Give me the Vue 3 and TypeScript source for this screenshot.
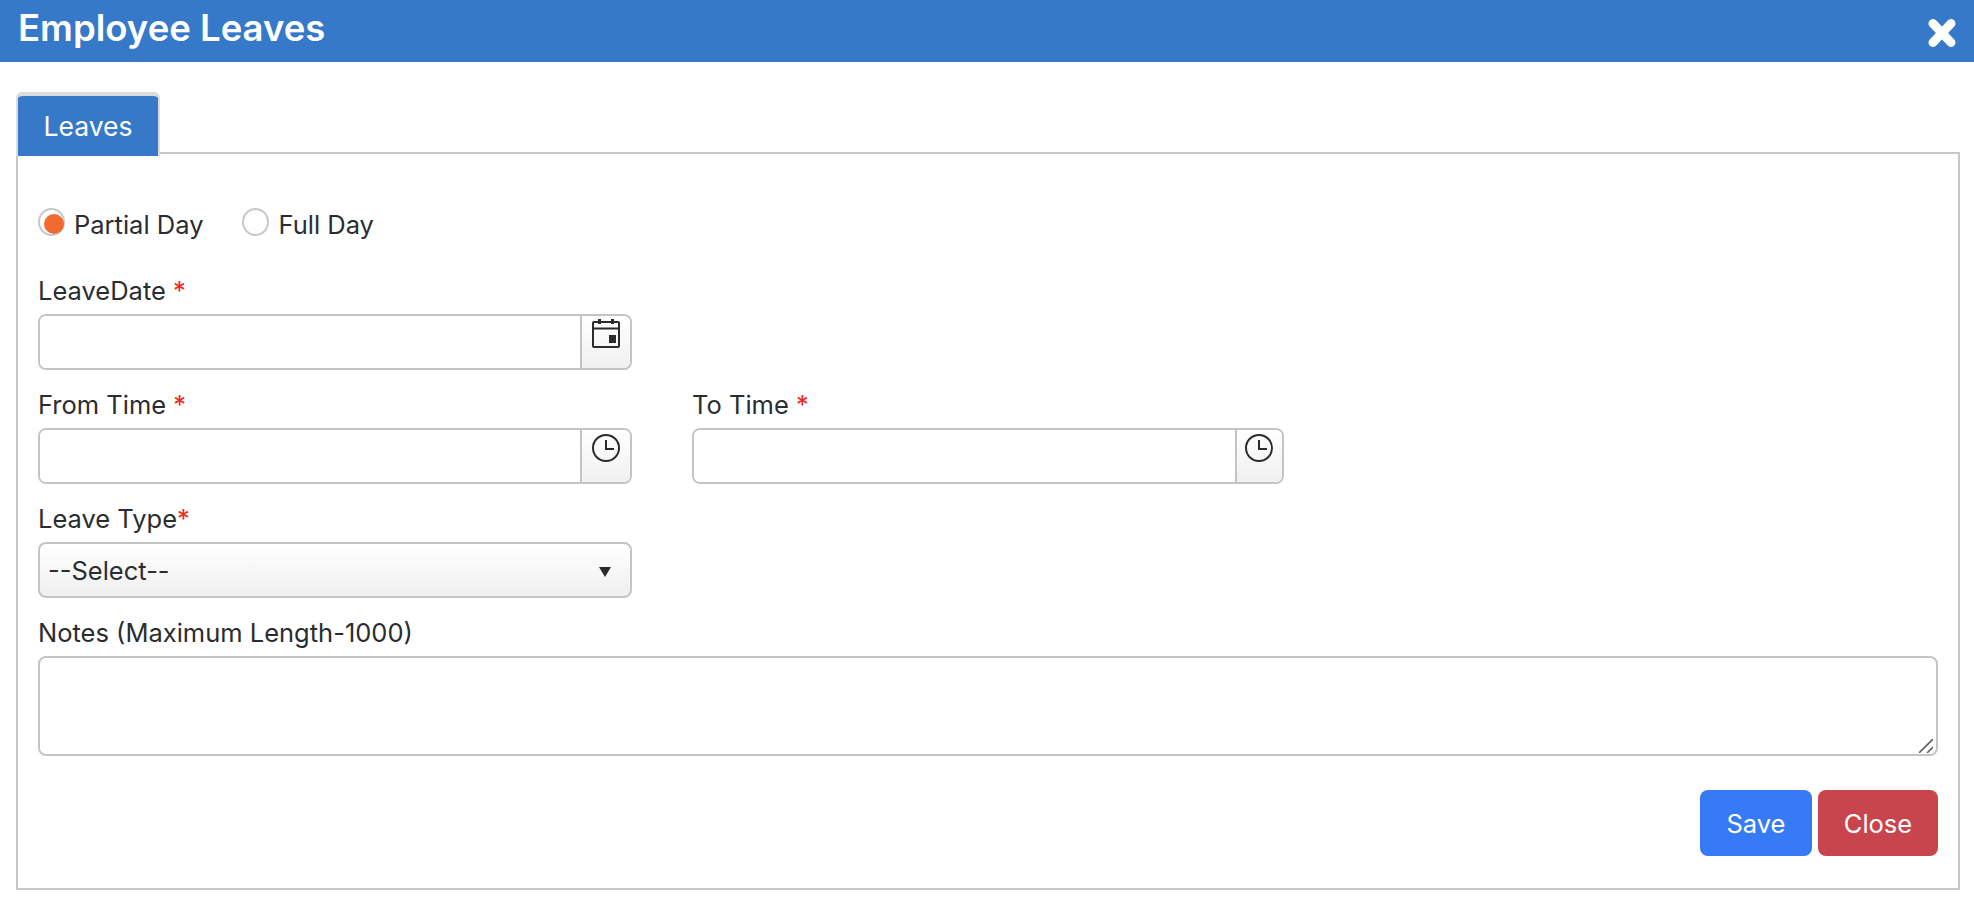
<script setup lang="ts">
const radios = [
  { label: 'Partial Day', checked: true },
  { label: 'Full Day', checked: false },
]
</script>

<template>
  <div class="page">
    <header class="titlebar">
      <h1>Employee Leaves</h1>
      <svg class="close-x" viewBox="0 0 28 30" aria-hidden="true">
        <path d="M5 5.5 23 24.5M23 5.5 5 24.5" />
      </svg>
    </header>

    <nav class="tabs"><div class="tab">Leaves</div></nav>

    <main class="panel">
      <div class="radios">
        <label v-for="r in radios" :key="r.label" class="radio">
          <span class="ring" :class="{ on: r.checked }"></span>
          <span class="radio-text">{{ r.label }}</span>
        </label>
      </div>

      <div class="row">
        <div class="field">
          <label>LeaveDate <em>*</em></label>
          <div class="group">
            <input type="text" />
            <span class="addon">
              <svg class="icon calendar" viewBox="0 0 28 30" aria-hidden="true">
                <path class="line" d="M2 4h24a1 1 0 0 1 1 1v23a1 1 0 0 1-1 1H2a1 1 0 0 1-1-1V5a1 1 0 0 1 1-1zM1 10.500h26" />
                <path class="solid" d="M6 1h3v5H6zM19 1h3v5h-3zM17 17h7v8h-7z" />
              </svg>
            </span>
          </div>
        </div>
      </div>

      <div class="row">
        <div class="field">
          <label>From Time <em>*</em></label>
          <div class="group">
            <input type="text" />
            <span class="addon">
              <svg class="icon" viewBox="0 0 28 28" aria-hidden="true">
                <circle class="line" cx="14" cy="14" r="13" />
                <path class="line" d="M14 6v9h8" />
              </svg>
            </span>
          </div>
        </div>
        <div class="field">
          <label>To Time <em>*</em></label>
          <div class="group">
            <input type="text" />
            <span class="addon narrow">
              <svg class="icon" viewBox="0 0 28 28" aria-hidden="true">
                <circle class="line" cx="14" cy="14" r="13" />
                <path class="line" d="M14 6v9h8" />
              </svg>
            </span>
          </div>
        </div>
      </div>

      <div class="row">
        <div class="field">
          <label>Leave Type<em>*</em></label>
          <div class="select-wrap">
            <select>
              <option>--Select--</option>
            </select>
            <span class="caret"></span>
          </div>
        </div>
      </div>

      <div class="field notes">
        <label>Notes (Maximum Length-1000)</label>
        <div class="area-wrap">
          <textarea></textarea>
          <svg class="grip" viewBox="0 0 14 14" aria-hidden="true">
            <path d="M0 14 14 0M8 14l6-6" />
          </svg>
        </div>
      </div>

      <div class="actions">
        <button type="button" class="btn save">Save</button>
        <button type="button" class="btn close">Close</button>
      </div>
    </main>
  </div>
</template>

<style>
html, body { background: #fff; }
</style>

<style scoped>
.page {
  font-family: Inter, "Liberation Sans", sans-serif;
  font-size: 25.500px;
  color: #2a2d30;
  padding-bottom: 28px;
}
.titlebar {
  height: 62px;
  background: #3779c9;
  color: #fff;
  display: flex;
  align-items: flex-start;
  justify-content: space-between;
  padding: 0 18px 0 18px;
}
.titlebar h1 {
  margin: 0;
  font-size: 36.500px;
  line-height: 57px;
  font-weight: 600;
}
.close-x {
  width: 28px;
  height: 30px;
  margin-top: 18px;
}
.close-x path {
  fill: none;
  stroke: #fff;
  stroke-width: 9;
  stroke-linecap: round;
}
.tabs {
  display: flex;
  margin: 30px 0 -4px 16px;
  position: relative;
}
.tab {
  width: 144px;
  height: 64px;
  box-sizing: border-box;
  border: 2px solid #dcdcdc;
  border-bottom: none;
  border-top-width: 4px;
  border-radius: 6px 6px 0 0;
  background: #3779c9;
  background-clip: padding-box;
  color: #fff;
  font-size: 26.500px;
  line-height: 60px;
  text-align: center;
}
.panel {
  margin: 0 14px 0 16px;
  border: 2px solid #c8c8c8;
  padding: 54px 20px 31px 20px;
  height: 738px;
  box-sizing: border-box;
}
.radios {
  display: flex;
  gap: 39px;
  height: 28px;
  margin-bottom: 37px;
}
.radio {
  display: flex;
  align-items: center;
  gap: 9px;
}
.radio-text {
  margin-top: 5px;
}
.ring {
  width: 27px;
  height: 28px;
  box-sizing: border-box;
  border: 2px solid #c8c8c8;
  border-radius: 50%;
  position: relative;
  background: #fff;
}
.ring.on::after {
  content: "";
  position: absolute;
  left: 4px;
  top: 4px;
  width: 20px;
  height: 20px;
  border-radius: 50%;
  background: #f06b2e;
}
.row {
  display: grid;
  grid-template-columns: 594px 592px;
  column-gap: 60px;
}
.field {
  margin-bottom: 17px;
}
.field label {
  display: block;
  line-height: 36px;
  margin-bottom: 5px;
}
.field em {
  color: #f0281e;
  font-style: normal;
}
.group {
  display: flex;
  height: 56px;
  box-sizing: border-box;
  border: 2px solid #c4c4c4;
  border-radius: 8px;
  overflow: hidden;
}
.group input {
  flex: 1;
  min-width: 0;
  border: none;
  outline: none;
  background: #fff;
  font: inherit;
  padding: 0 10px;
}
.addon {
  width: 50px;
  flex: none;
  box-sizing: border-box;
  border-left: 2px solid #c4c4c4;
  background: linear-gradient(#fff, #f0f0f0);
  display: flex;
  justify-content: center;
  align-items: flex-start;
  padding-top: 3px;
}
.addon.narrow {
  width: 47px;
}
.icon {
  width: 28px;
  height: 30px;
  overflow: visible;
  margin-right: 1px;
}
.calendar {
  margin-top: -1px;
}
.line {
  fill: none;
  stroke: #2b2b2b;
  stroke-width: 2;
}
.solid {
  fill: #2b2b2b;
}
.select-wrap {
  position: relative;
}
.select-wrap select {
  display: block;
  width: 100%;
  height: 56px;
  box-sizing: border-box;
  appearance: none;
  border: 2px solid #c4c4c4;
  border-radius: 8px;
  background: linear-gradient(#fff, #efefef);
  font: inherit;
  color: inherit;
  padding: 0 8px;
  outline: none;
}
.caret {
  position: absolute;
  right: 21px;
  top: 25px;
  width: 0;
  height: 0;
  border-left: 6px solid transparent;
  border-right: 6px solid transparent;
  border-top: 10px solid #2b2b2b;
}
.notes {
  margin-bottom: 34px;
}
.area-wrap {
  position: relative;
}
.area-wrap textarea {
  display: block;
  width: 100%;
  height: 100px;
  box-sizing: border-box;
  border: 2px solid #c4c4c4;
  border-radius: 8px;
  font: inherit;
  outline: none;
  resize: none;
}
.grip {
  position: absolute;
  right: 5px;
  bottom: 3px;
  width: 14px;
  height: 14px;
}
.grip path {
  fill: none;
  stroke: #5f5f5f;
  stroke-width: 1.600;
}
.actions {
  display: flex;
  justify-content: flex-end;
  gap: 6px;
}
.btn {
  height: 66px;
  border: none;
  border-radius: 8px;
  color: #fff;
  font: inherit;
}
.save {
  width: 112px;
  background: #377af6;
}
.close {
  width: 120px;
  background: #c9454e;
}
</style>
